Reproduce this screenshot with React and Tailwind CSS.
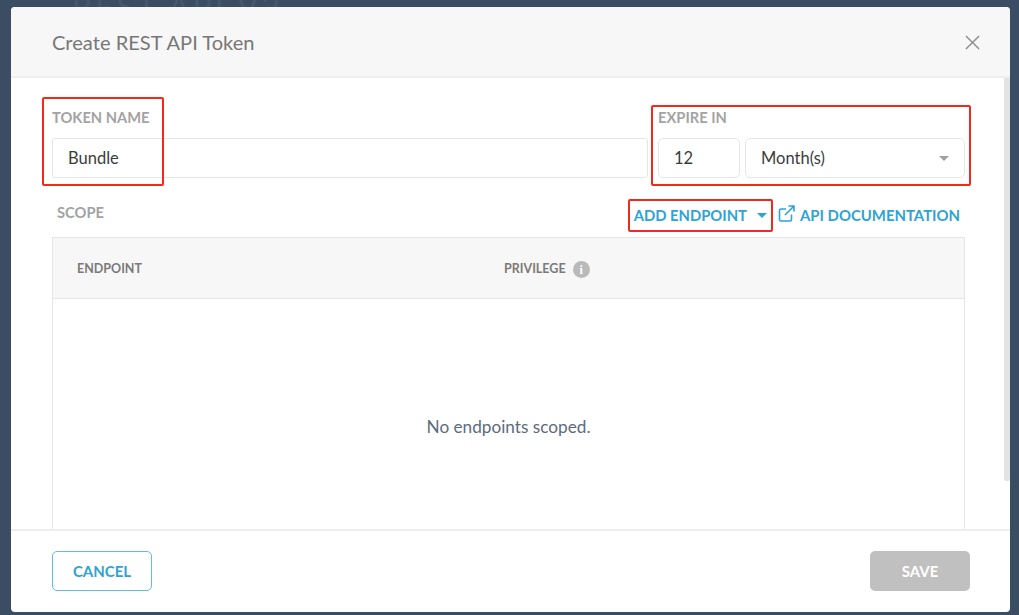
import React from 'react';

const App = () => {
  return (
    <div className="relative h-[615px] w-[1019px] overflow-hidden bg-[#3a4d63] font-['Lato',sans-serif]">
      {/* Page behind the modal */}
      <div className="absolute left-[72px] top-[-17px] text-[32px] tracking-[3px] text-[#45576c]">REST API V2</div>

      <div className="absolute left-[11px] top-[7px] flex h-[605px] w-[999px] flex-col overflow-hidden rounded-[4px] bg-white">
        {/* Header */}
        <div className="flex h-[71px] shrink-0 items-center justify-between border-b-2 border-[#eeeeee] bg-[#f7f7f7] pl-[41px] pr-[30px]">
          <h1 className="mt-[2px] text-[20.1px] text-[#777777]">Create REST API Token</h1>
          <svg className="mt-[2px]" width="15" height="15" viewBox="0 0 16 16" fill="none" stroke="#8c8c8c" strokeWidth="1.5">
            <path d="M1 1l14 14M15 1L1 15" />
          </svg>
        </div>

        {/* Body */}
        <div className="relative flex-1 overflow-hidden pl-[41px] pr-[45px]">
          <div className="absolute right-0 top-0 h-[403px] w-[6px] rounded-b-[2px] bg-[#e3e3e3]" />

          <div className="mt-[29px] flex gap-[10px]">
            <div className="flex-1">
              <label className="block text-[14.7px] font-bold leading-[20px] text-[#a3a3a3]">TOKEN NAME</label>
              <div className="mt-[11px] flex h-[40px] items-center rounded-[3px] border border-[#e6e6e6] pl-[15px] text-[16.5px] text-[#3c3c3c]">Bundle</div>
            </div>
            <div className="w-[307px]">
              <label className="block text-[14.7px] font-bold leading-[20px] text-[#a3a3a3]">EXPIRE IN</label>
              <div className="mt-[11px] flex gap-[5px]">
                <div className="flex h-[40px] w-[82px] items-center rounded-[5px] border border-[#e6e6e6] pl-[15px] text-[16.5px] text-[#3c3c3c]">12</div>
                <div className="flex h-[40px] flex-1 items-center justify-between rounded-[5px] border border-[#e6e6e6] pl-[15px] pr-[15px] text-[16.5px] text-[#3c3c3c]">
                  <span>Month(s)</span>
                  <span className="h-0 w-0 border-x-[5px] border-t-[5px] border-x-transparent border-t-[#a0a0a0]" />
                </div>
              </div>
            </div>
          </div>

          <div className="mt-[23px] flex h-[22px] items-center justify-between pl-[5px]">
            <span className="text-[14.7px] font-bold text-[#a3a3a3]">SCOPE</span>
            <div className="mt-[7px] flex items-center pr-[5px] text-[14.9px] font-bold text-[#2ea3d5]">
              <span className="text-[14.8px]">ADD ENDPOINT</span>
              <span className="ml-[10px] mr-[11px] h-0 w-0 border-x-[5px] border-t-[5px] border-x-transparent border-t-[#2ea3d5]" />
              <svg className="mb-[4px] mr-[5px]" width="17" height="17" viewBox="0 0 17 17" fill="none" stroke="#2ea3d5" strokeWidth="1.6">
                <path d="M13.5 9.5v5a1.5 1.5 0 0 1-1.5 1.5H3a1.5 1.5 0 0 1-1.5-1.5V5.5A1.5 1.5 0 0 1 3 4h5" />
                <path d="M10.5 1h5.5v5.5M16 1L7 10" />
              </svg>
              <span>API DOCUMENTATION</span>
            </div>
          </div>

          {/* Endpoint table */}
          <div className="mt-[14px] h-[320px] border border-[#e6e6e6]">
            <div className="flex h-[61px] items-center border-b border-[#e6e6e6] bg-[#f7f7f7] pl-[24px] pt-[3px] text-[12.5px] font-bold text-[#7a7a7a]">
              <span className="w-[427px]">ENDPOINT</span>
              <span>PRIVILEGE</span>
              <span className="ml-[7px] flex h-[17px] w-[17px] items-center justify-center rounded-full bg-[#b9b9b9] font-['Liberation_Serif',serif] text-[12px] font-bold text-white">i</span>
            </div>
            <div className="pt-[115px] text-center text-[17.2px] text-[#5c6b7d]">No endpoints scoped.</div>
          </div>
        </div>

        {/* Footer */}
        <div className="flex h-[83px] shrink-0 items-center justify-between border-t-2 border-[#eeeeee] pb-[2px] pl-[41px] pr-[40px]">
          <button className="h-[40px] w-[100px] rounded-[5px] border border-[#5bbfe6] pt-[2px] text-[15px] font-bold text-[#2ea3d5]">CANCEL</button>
          <button className="h-[40px] w-[100px] rounded-[5px] bg-[#c0c0c0] pt-[2px] text-[15px] font-bold text-white">SAVE</button>
        </div>
      </div>

      {/* Red annotation boxes */}
      <div className="absolute left-[42px] top-[97px] h-[89px] w-[122px] rounded-[2px] border-2 border-[#f5281e]" />
      <div className="absolute left-[651px] top-[105px] h-[81px] w-[320px] rounded-[2px] border-2 border-[#f5281e]" />
      <div className="absolute left-[628px] top-[199px] h-[33px] w-[145px] rounded-[2px] border-2 border-[#f5281e]" />
    </div>
  );
};

export default App;
